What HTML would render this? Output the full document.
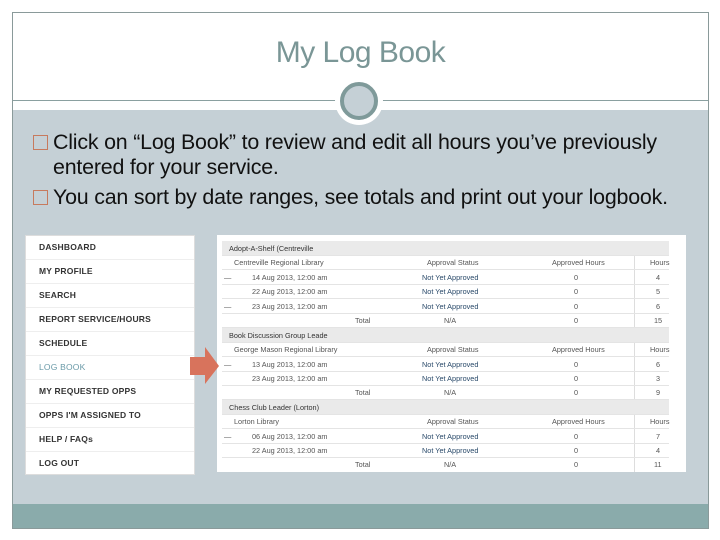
<!DOCTYPE html>
<html><head><style>
body{margin:0;width:720px;height:540px;background:#fff;position:relative;overflow:hidden;font-family:"Liberation Sans",sans-serif}
.frame{position:absolute;left:12px;top:12px;width:695px;height:515px;border:1px solid #8a9a9a;background:#c5d0d6}
.top{position:absolute;left:0;top:0;width:695px;height:97px;background:#fff}
.title{position:absolute;left:0;width:695px;top:23px;text-align:center;font-size:30px;color:#7a9696;letter-spacing:-0.5px}
.hl{position:absolute;left:0;top:87px;width:695px;height:1px;background:#8aa0a0}
.circ{position:absolute;left:327px;top:69px;width:30px;height:30px;border:4px solid #7f9a9a;border-radius:50%;box-shadow:0 0 0 5px #fff;background:#c5d0d6}
.bot{position:absolute;left:0;bottom:0;width:695px;height:24px;background:#8aabab}
.b{position:absolute;left:20px;font-size:21.4px;color:#111;line-height:25px;white-space:nowrap;letter-spacing:-0.2px}
.sq{display:inline-block;width:13px;height:13px;border:1.5px solid #c77a5e;margin-right:5px;vertical-align:-1px}
.menu{position:absolute;left:12px;top:222px;width:168px;height:238px;background:#fff;border:1px solid #ddd}
.menu div{height:23px;line-height:23px;padding-left:13px;font-size:8.5px;font-weight:bold;color:#333;border-bottom:1px solid #eee;letter-spacing:0.2px}
.tbl{position:absolute;left:204px;top:222px;width:469px;height:237px;background:#fff}
.r{position:absolute;left:5px;width:447px;height:14px;font-size:7.3px;color:#555;border-bottom:1px solid #e4e4e4}
.g{background:#eaeaea;color:#333}
.r span{position:absolute;top:3px}
.arrow{position:absolute;left:190px;top:347px}
</style></head><body>
<div class="frame">
<div class="top"><div class="title">My Log Book</div></div>
<div class="hl"></div>
<div class="circ"></div>
<div class="b" style="top:117px"><span class="sq" style="border-color:#c77a5e"></span>Click on “Log Book” to review and edit all hours you’ve previously</div>
<div class="b" style="top:142px;left:40px">entered for your service.</div>
<div class="b" style="top:172px"><span class="sq"></span>You can sort by date ranges, see totals and print out your logbook.</div>
<div class="menu">
<div>DASHBOARD</div><div>MY PROFILE</div><div>SEARCH</div><div>REPORT SERVICE/HOURS</div><div>SCHEDULE</div><div style="color:#6a9aa8;font-weight:normal">LOG BOOK</div><div>MY REQUESTED OPPS</div><div>OPPS I'M ASSIGNED TO</div><div>HELP / FAQs</div><div style="border:0">LOG OUT</div>
</div>
<div class="tbl">
<div style="position:absolute;left:417px;top:14px;width:1px;height:223px;background:#ddd"></div>
<div class="r g" style="top:6px"><span style="left:7px">Adopt-A-Shelf (Centreville</span></div>
<div class="r" style="top:20px"><span style="left:12px">Centreville Regional Library</span><span style="left:205px">Approval Status</span><span style="left:330px">Approved Hours</span><span style="left:428px">Hours</span></div>
<div class="r" style="top:35px"><span style="left:2px">—</span><span style="left:30px">14 Aug 2013, 12:00 am</span><span style="left:200px;color:#2a4a6a">Not Yet Approved</span><span style="left:352px">0</span><span style="left:434px">4</span></div>
<div class="r" style="top:49px"><span style="left:30px">22 Aug 2013, 12:00 am</span><span style="left:200px;color:#2a4a6a">Not Yet Approved</span><span style="left:352px">0</span><span style="left:434px">5</span></div>
<div class="r" style="top:64px"><span style="left:2px">—</span><span style="left:30px">23 Aug 2013, 12:00 am</span><span style="left:200px;color:#2a4a6a">Not Yet Approved</span><span style="left:352px">0</span><span style="left:434px">6</span></div>
<div class="r" style="top:78px"><span style="left:133px">Total</span><span style="left:222px">N/A</span><span style="left:352px">0</span><span style="left:432px">15</span></div>
<div class="r g" style="top:93px"><span style="left:7px">Book Discussion Group Leade</span></div>
<div class="r" style="top:107px"><span style="left:12px">George Mason Regional Library</span><span style="left:205px">Approval Status</span><span style="left:330px">Approved Hours</span><span style="left:428px">Hours</span></div>
<div class="r" style="top:122px"><span style="left:2px">—</span><span style="left:30px">13 Aug 2013, 12:00 am</span><span style="left:200px;color:#2a4a6a">Not Yet Approved</span><span style="left:352px">0</span><span style="left:434px">6</span></div>
<div class="r" style="top:136px"><span style="left:30px">23 Aug 2013, 12:00 am</span><span style="left:200px;color:#2a4a6a">Not Yet Approved</span><span style="left:352px">0</span><span style="left:434px">3</span></div>
<div class="r" style="top:150px"><span style="left:133px">Total</span><span style="left:222px">N/A</span><span style="left:352px">0</span><span style="left:434px">9</span></div>
<div class="r g" style="top:165px"><span style="left:7px">Chess Club Leader (Lorton)</span></div>
<div class="r" style="top:179px"><span style="left:12px">Lorton Library</span><span style="left:205px">Approval Status</span><span style="left:330px">Approved Hours</span><span style="left:428px">Hours</span></div>
<div class="r" style="top:194px"><span style="left:2px">—</span><span style="left:30px">06 Aug 2013, 12:00 am</span><span style="left:200px;color:#2a4a6a">Not Yet Approved</span><span style="left:352px">0</span><span style="left:434px">7</span></div>
<div class="r" style="top:208px"><span style="left:30px">22 Aug 2013, 12:00 am</span><span style="left:200px;color:#2a4a6a">Not Yet Approved</span><span style="left:352px">0</span><span style="left:434px">4</span></div>
<div class="r" style="top:222px;border:0"><span style="left:133px">Total</span><span style="left:222px">N/A</span><span style="left:352px">0</span><span style="left:432px">11</span></div>
</div>
<div class="bot"></div>
</div>
<svg class="arrow" width="30" height="38"><polygon points="0,10 15,10 15,0 29,19 15,37 15,28 0,28" fill="#d8735c"/></svg>
</body></html>
